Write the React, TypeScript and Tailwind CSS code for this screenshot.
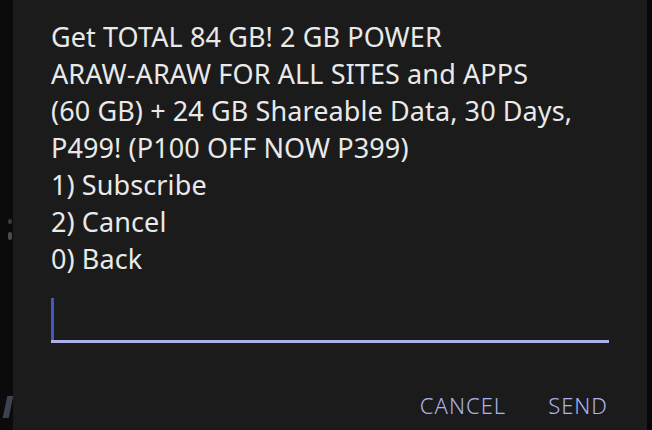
import React from 'react';

const lines = [
  'Get TOTAL 84 GB! 2 GB POWER',
  'ARAW-ARAW FOR ALL SITES and APPS',
  '(60 GB) + 24 GB Shareable Data, 30 Days,',
  'P499! (P100 OFF NOW P399)',
  '1) Subscribe',
  '2) Cancel',
  '0) Back',
];

export default function App() {
  return (
    <div className="w-[652px] h-[430px] flex bg-[#0b0b0c] overflow-hidden" style={{ fontFamily: '"Noto Sans", sans-serif' }}>
      {/* underlying screen edge */}
      <div className="w-[13px] relative">
        <div className="absolute left-[8px] top-[219px] w-[4px] h-[5px] rounded-full bg-[#3a3a40]" />
        <div className="absolute left-[8px] top-[232px] w-[4px] h-[8px] rounded-sm bg-[#4a4a52]" />
        <div className="absolute left-[5px] top-[396px] w-[6px] h-[22px] bg-[#3d4150] skew-x-[-12deg]" />
      </div>

      {/* dialog */}
      <div className="flex-1 bg-[#1b1b1b] pl-[38px] pr-[38px] pt-[18px] flex flex-col">
        <div className="text-[#e9e9e9] text-[27px] leading-[37px] tracking-[0.1px] whitespace-nowrap">
          {lines.map((l) => (
            <div key={l}>{l}</div>
          ))}
        </div>

        <div className="mt-[18px] h-[48px] border-b-[3px] border-[#aab1e8] relative">
          <div className="absolute left-0 top-[3px] w-[3px] h-[42px] bg-[#4657c2]" />
        </div>

        <div className="flex justify-end gap-[42px] mt-[47px] pr-[1px] text-[#a9b3ee] text-[22px] leading-[30px] tracking-[1px] font-light">
          <span>CANCEL</span>
          <span>SEND</span>
        </div>
      </div>

      <div className="w-[5px] bg-[#070707]" />
    </div>
  );
}
